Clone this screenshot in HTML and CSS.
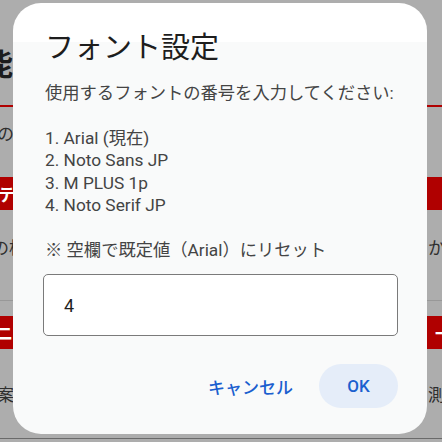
FILE: index.html
```html
<!DOCTYPE html>
<html lang="ja">
<head>
<meta charset="utf-8">
<link rel="stylesheet" href="styles.css">
</head>
<body>
<div class="page">
  <div class="head"><span class="h-text">機能</span></div>
  <div class="rule"></div>
  <div class="row r1"><span class="l-text">の</span></div>
  <div class="bar b1"><span class="bar-text">テ</span></div>
  <div class="row r2"><span class="l-text m6">の根</span><span class="r-text">から</span></div>
  <div class="divider"></div>
  <div class="bar b2"><span class="bar-text m6">ニュース</span><span class="bar-r">一</span></div>
  <div class="row r3"><span class="l-text">案</span><span class="r-text">測定</span></div>
  <div class="bottom-line"></div>
</div>

<div class="dialog">
  <h1 class="title">フォント設定</h1>
  <p class="message">使用するフォントの番号を入力してください:

1. Arial (現在)
2. Noto Sans JP
3. M PLUS 1p
4. Noto Serif JP

※ 空欄で既定値（Arial）にリセット</p>
  <div class="field">4</div>
  <div class="actions">
    <button class="btn btn-text">キャンセル</button>
    <button class="btn btn-tonal">OK</button>
  </div>
</div>
</body>
</html>
```

FILE: styles.css
```css
* { box-sizing: border-box; }
html, body {
  margin: 0;
  width: 442px;
  height: 442px;
  overflow: hidden;
}
body {
  background: #adadad;
  font-family: Roboto, "Noto Sans CJK JP", sans-serif;
  position: relative;
}
.page {
  display: flex;
  flex-direction: column;
  width: 442px;
}
.head {
  height: 105px;
  padding-top: 44px;
  overflow: visible;
}
.h-text {
  display: block;
  margin-left: -47px;
  font-family: "Noto Sans CJK JP", sans-serif;
  font-size: 30px;
  font-weight: 700;
  line-height: 36px;
  color: #1c1c1c;
  white-space: nowrap;
}
.rule {
  height: 2px;
  background: #b00000;
}
.row {
  display: flex;
  justify-content: space-between;
  align-items: flex-start;
  font-family: "Noto Sans CJK JP", sans-serif;
  font-size: 17px;
  line-height: 24px;
  color: #2e2e2e;
  white-space: nowrap;
}
.r1 { height: 70px; padding-top: 14px; }
.r2 { height: 90px; padding-top: 25px; }
.r3 { height: 89px; padding-top: 33px; }
.l-text { margin-left: -3px; }
.l-text.m6 { margin-left: -8px; }
.r-text { margin-right: -20px; }
.bar {
  display: flex;
  justify-content: space-between;
  align-items: center;
  background: #b00000;
  color: #fff;
  font-family: "Noto Sans CJK JP", sans-serif;
  font-size: 17px;
  font-weight: 700;
  white-space: nowrap;
}
.b1 { height: 33px; }
.b2 { height: 33px; margin-top: 15px; }
.bar-text { margin-left: -2px; }
.bar-text.m6 { margin-left: -4px; }
.bar-r { margin-right: -10px; }
.divider {
  height: 1px;
  background: #989898;
}
.bottom-line {
  height: 1px;
  background: #6a6a6a;
}

.dialog {
  position: absolute;
  left: 13px;
  top: 3px;
  width: 414px;
  height: 431px;
  border-radius: 28px;
  background: linear-gradient(#ffffff 0 39px, #f9fafa 39px);
  padding: 22px 29px 0 30px;
  display: flex;
  flex-direction: column;
}
.title {
  margin: 0 0 0 2px;
  font-family: "Noto Sans CJK JP", sans-serif;
  font-size: 29px;
  font-weight: 400;
  line-height: 40px;
  color: #1d1d1d;
}
.message {
  margin: 17px 0 0 2px;
  white-space: pre-wrap;
  font-size: 17.3px;
  line-height: 22.4px;
  color: #444;
}
.field {
  margin-top: 13px;
  height: 62px;
  border: 1px solid #7a7a7a;
  border-radius: 5px;
  background: #fff;
  padding-left: 20px;
  display: flex;
  align-items: center;
  font-size: 18px;
  color: #1f1f1f;
}
.actions {
  margin-top: 28px;
  display: flex;
  justify-content: flex-end;
  gap: 12px;
}
.btn {
  height: 44px;
  border: none;
  border-radius: 22px;
  font-family: Roboto, "Noto Sans CJK JP", sans-serif;
  font-size: 17px;
  font-weight: 500;
  color: #1b5fcf;
  background: transparent;
  padding: 0 14px;
}
.btn-tonal {
  width: 79px;
  padding: 0;
  background: #e5edf9;
}
```
